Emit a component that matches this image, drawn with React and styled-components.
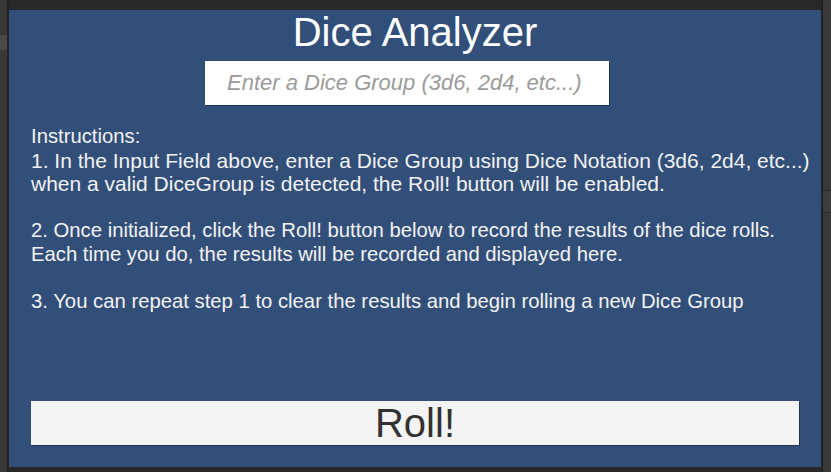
import styled, { createGlobalStyle } from "styled-components";

const GlobalStyle = createGlobalStyle`
  html, body {
    margin: 0;
    padding: 0;
    background: #282828;
    overflow: hidden;
  }
  * {
    box-sizing: border-box;
  }
`;

const Frame = styled.div`
  display: grid;
  grid-template-columns: 7px 2px 812px 2px 8px;
  width: 831px;
  height: 472px;
  background: #232323;
  font-family: "Liberation Sans", Arial, sans-serif;
`;

const SideStrip = styled.div`
  display: flex;
  flex-direction: column;
  background: #383838;
`;

const SideMark = styled.div`
  height: ${(p) => p.$h}px;
  margin-top: ${(p) => p.$top}px;
  background: ${(p) => p.$bg};
  border-top: ${(p) => (p.$line ? "1px solid #2a2a2a" : "none")};
  border-bottom: ${(p) => (p.$line ? "1px solid #2a2a2a" : "none")};
`;

const Gutter = styled.div`
  background: #222222;
`;

const Centre = styled.div`
  display: flex;
  flex-direction: column;
  background: #282828;
  padding: 10px 0 5px;
`;

const Panel = styled.div`
  flex: 1;
  display: flex;
  flex-direction: column;
  background: #324f7a;
`;

const Title = styled.h1`
  margin: 0;
  height: 46px;
  line-height: 44px;
  text-align: center;
  font-size: 40px;
  font-weight: normal;
  color: #ffffff;
`;

const DiceInput = styled.input`
  width: 404px;
  height: 44px;
  margin: 5px 0 0 196px;
  padding: 0 0 0 22px;
  border: none;
  outline: none;
  background: #ffffff;
  font-family: inherit;
  font-size: 22px;
  font-style: italic;
  color: #323232;
  box-shadow: 1px 1px 0 rgba(0, 0, 0, 0.3);

  &::placeholder {
    color: #9b9b9b;
  }
`;

const Instructions = styled.div`
  flex: 1;
  margin: 20px 0 0 22px;
  color: #f2f2f2;
`;

const Line = styled.div`
  height: 23.6px;
  line-height: 23.6px;
  font-size: ${(p) => p.$size || 20.3}px;
  white-space: pre;
`;

const RollButton = styled.button`
  height: 44px;
  margin: 0 22px 22px;
  border: none;
  background: #f4f4f4;
  font-family: inherit;
  font-size: 40px;
  color: #323232;
  box-shadow: 1px 1px 0 rgba(0, 0, 0, 0.35);
  padding: 0;
  cursor: pointer;
`;

const lines = [
  { text: "Instructions:" },
  { text: "1. In the Input Field above, enter a Dice Group using Dice Notation (3d6, 2d4, etc...)", size: 21 },
  { text: "when a valid DiceGroup is detected, the Roll! button will be enabled.", size: 21 },
  { text: " " },
  { text: "2. Once initialized, click the Roll! button below to record the results of the dice rolls." },
  { text: "Each time you do, the results will be recorded and displayed here." },
  { text: " " },
  { text: "3. You can repeat step 1 to clear the results and begin rolling a new Dice Group" },
];

export default function App() {
  return (
    <>
      <GlobalStyle />
      <Frame>
        <SideStrip>
          <SideMark $top={35} $h={15} $bg="#4a4a4a" />
        </SideStrip>
        <Gutter />
        <Centre>
          <Panel>
            <Title>Dice Analyzer</Title>
            <DiceInput placeholder="Enter a Dice Group (3d6, 2d4, etc...)" />
            <Instructions>
              {lines.map((l, i) => (
                <Line key={i} $size={l.size}>
                  {l.text}
                </Line>
              ))}
            </Instructions>
            <RollButton>Roll!</RollButton>
          </Panel>
        </Centre>
        <Gutter />
        <SideStrip>
          <SideMark $top={190} $h={23} $bg="#3c3c3c" $line />
        </SideStrip>
      </Frame>
    </>
  );
}
